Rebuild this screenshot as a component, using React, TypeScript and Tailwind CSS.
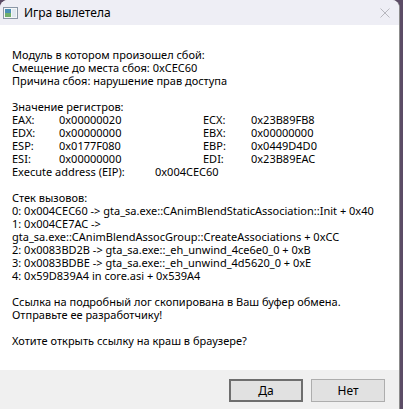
import React from "react";

const regs: [string, string, string, string][] = [
  ["EAX:", "0x00000020", "ECX:", "0x23B89FB8"],
  ["EDX:", "0x00000000", "EBX:", "0x00000000"],
  ["ESP:", "0x0177F080", "EBP:", "0x0449D4D0"],
  ["ESI:", "0x00000000", "EDI:", "0x23B89EAC"],
];

const stack = [
  "0: 0x004CEC60 -> gta_sa.exe::CAnimBlendStaticAssociation::Init + 0x40",
  "1: 0x004CE7AC ->",
  "gta_sa.exe::CAnimBlendAssocGroup::CreateAssociations + 0xCC",
  "2: 0x0083BD2B -> gta_sa.exe::_eh_unwind_4ce6e0_0 + 0xB",
  "3: 0x0083BDBE -> gta_sa.exe::_eh_unwind_4d5620_0 + 0xE",
  "4: 0x59D839A4 in core.asi + 0x539A4",
];

function AppIcon() {
  return (
    <svg width="15" height="12" viewBox="0 0 15 12">
      <rect x="0.5" y="0.5" width="14" height="11" fill="#f4f6f8" stroke="#8a96a6" />
      <rect x="2" y="2" width="6" height="8" fill="#4a8fb5" />
      <rect x="2" y="6" width="6" height="4" fill="#6fae6a" />
      <rect x="9" y="2" width="4" height="8" fill="#dfe7ef" />
    </svg>
  );
}

export default function App() {
  return (
    <div className="h-[409px] w-[403px] bg-[#5c4c66] overflow-hidden">
      <div
        className="flex h-[409px] w-[400px] flex-col overflow-hidden rounded-t-[8px] border-r border-[#8c8c8c] bg-white text-[#000]"
        style={{ fontFamily: '"Segoe UI", "Noto Sans", "Open Sans", sans-serif' }}
      >
        <div className="flex h-[25px] shrink-0 items-center bg-[#eeeef5] pl-[3px]">
          <AppIcon />
          <span className="ml-[6px] text-[12px] leading-none">Игра вылетела</span>
          <svg className="ml-auto mr-[9px]" width="10" height="10" viewBox="0 0 10 10">
            <path d="M0.5 0.5 L9.5 9.5 M9.5 0.5 L0.5 9.5" stroke="#b0b0b8" strokeWidth="0.9" />
          </svg>
        </div>

        <div className="flex-1 px-[12px] pt-[23px] text-[11px] leading-[13px]">
          <div>Модуль в котором произошел сбой:</div>
          <div>Смещение до места сбоя: 0xCEC60</div>
          <div>Причина сбоя: нарушение прав доступа</div>
          <div className="h-[13px]" />
          <div>Значение регистров:</div>
          {regs.map((r) => (
            <div key={r[0]} className="flex">
              <span className="w-[47px]">{r[0]}</span>
              <span className="w-[144px]">{r[1]}</span>
              <span className="w-[48px]">{r[2]}</span>
              <span>{r[3]}</span>
            </div>
          ))}
          <div className="flex">
            <span className="w-[143px]">Execute address (EIP):</span>
            <span>0x004CEC60</span>
          </div>
          <div className="h-[13px]" />
          <div>Стек вызовов:</div>
          {stack.map((s) => (
            <div key={s} className="whitespace-nowrap">{s}</div>
          ))}
          <div className="h-[13px]" />
          <div>Ссылка на подробный лог скопирована в Ваш буфер обмена.</div>
          <div>Отправьте ее разработчику!</div>
          <div className="h-[13px]" />
          <div>Хотите открыть ссылку на краш в браузере?</div>
        </div>

        <div className="flex h-[39px] shrink-0 items-start justify-end gap-[8px] bg-[#f0f0f0] pr-[14px] pt-[9px]">
          <button className="h-[23px] w-[74px] border-2 border-[#6e6e6e] bg-[#e1e1e1] text-[12px] leading-none">
            Да
          </button>
          <button className="h-[23px] w-[74px] border border-[#adadad] bg-[#e1e1e1] text-[12px] leading-none">
            Нет
          </button>
        </div>
      </div>
    </div>
  );
}
